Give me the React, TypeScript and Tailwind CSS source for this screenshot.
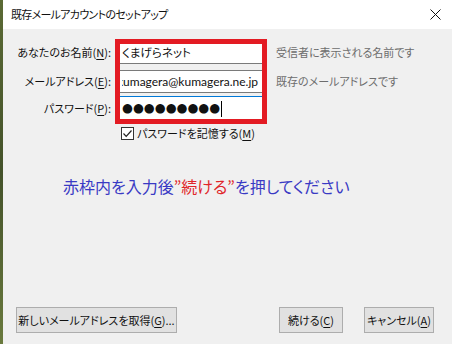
import React from 'react'

const jp = { fontFamily: '"Noto Sans CJK JP", sans-serif' }

function Key({ k }: { k: string }) {
  return <span className="underline underline-offset-2">{k}</span>
}

export default function App() {
  return (
    <div className="flex h-[344px] w-[452px] overflow-hidden text-[#111] [font-feature-settings:'palt']" style={jp}>
      <div className="w-[3px] bg-gradient-to-b from-[#5b6a35] via-[#44522a] to-[#6a7a3e]" />
      <div className="flex flex-1 flex-col bg-[#f0f0f0]">
        {/* title bar */}
        <div className="flex h-[29px] items-center justify-between bg-white pl-[8px] pr-[10px]">
          <span className="text-[11px] tracking-[-0.7px]">既存メールアカウントのセットアップ</span>
          <svg width="11" height="11" viewBox="0 0 11 11" className="mr-[1px]">
            <path d="M0.5 0.5 L10.5 10.5 M10.5 0.5 L0.5 10.5" stroke="#111" strokeWidth="1" />
          </svg>
        </div>

        <div className="relative flex flex-1 flex-col">
          {/* form */}
          <div className="grid grid-cols-[115px_147px_1fr] pt-[12px] text-[11px]">
            <div className="flex h-[23px] items-center justify-end pr-[7px]">あなたのお名前(<Key k="N" />):</div>
            <div className="flex h-[23px] items-center border border-[#7a7a7a] bg-white pl-[3px] text-[11.5px]">くまげらネット</div>
            <div className="flex h-[23px] items-center pl-[11px] text-[#6d6d6d]">受信者に表示される名前です</div>

            <div className="mt-[6px] flex h-[23px] items-center justify-end pr-[7px]">メールアドレス(<Key k="E" />):</div>
            <div className="mt-[6px] flex h-[23px] items-center border border-[#7a7a7a] bg-white pl-[3px]">
              <div className="flex-1 overflow-hidden">
                <span className="-ml-[5px] block whitespace-nowrap text-[12px]" style={{ fontFamily: 'Lato, sans-serif' }}>kumagera@kumagera.ne.jp</span>
              </div>
            </div>
            <div className="mt-[6px] flex h-[23px] items-center pl-[11px] text-[#6d6d6d]">既存のメールアドレスです</div>

            <div className="mt-[3px] flex h-[25px] items-center justify-end pr-[7px]">パスワード(<Key k="P" />):</div>
            <div className="mt-[3px] flex h-[25px] items-center border border-[#0078d7] bg-white pl-[3px]">
              <span className="text-[12.5px] leading-none" style={{ fontFamily: '"DejaVu Sans", sans-serif' }}>●●●●●●●●●</span>
              <span className="ml-[1px] h-[16px] w-[1px] bg-black" />
            </div>
            <div className="mt-[3px]" />

            <div />
            <label className="col-span-2 mt-[6px] flex h-[13px] items-center gap-[3px]">
              <span className="ml-[3px] flex h-[13px] w-[13px] items-center justify-center border border-[#333] bg-white">
                <svg width="11" height="11" viewBox="0 0 11 11">
                  <path d="M1.5 5.5 L4.2 8.3 L9.5 2.5" fill="none" stroke="#222" strokeWidth="1.2" />
                </svg>
              </span>
              <span>パスワードを記憶する(<Key k="M" />)</span>
            </label>
          </div>

          {/* red highlight frame */}
          <div className="absolute left-[112px] top-[10px] h-[85px] w-[152px] border-[5px] border-[#e31b23]" />

          <p className="mt-[36px] pl-[60px] text-[16px] leading-[20px] text-[#3a3ac4]">
            赤枠内を入力後<span className="text-[#e0262a]">”続ける”</span>を押してください
          </p>

          <div className="flex-1" />

          <div className="flex items-center whitespace-nowrap px-[13px] pb-[11px] text-[11px]">
            <button className="h-[26px] w-[161px] border border-[#adadad] bg-[#e1e1e1]">
              新しいメールアドレスを取得(<Key k="G" />)...
            </button>
            <div className="flex-1" />
            <button className="h-[26px] w-[64px] border border-[#adadad] bg-[#e1e1e1]">
              続ける(<Key k="C" />)
            </button>
            <button className="ml-[21px] mr-[5px] h-[26px] w-[70px] border border-[#adadad] bg-[#e1e1e1]">
              キャンセル(<Key k="A" />)
            </button>
          </div>
        </div>
      </div>
    </div>
  )
}
